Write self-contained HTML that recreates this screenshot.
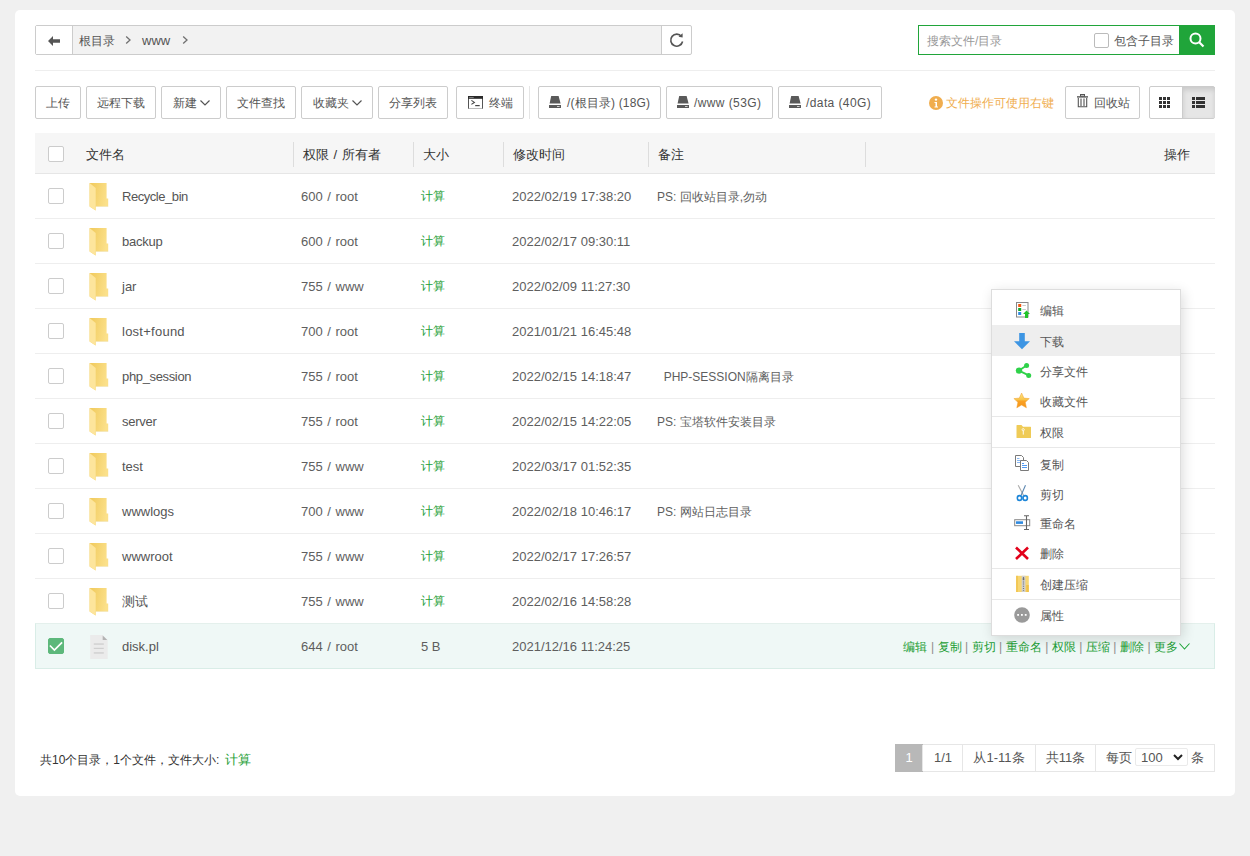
<!DOCTYPE html>
<html><head><meta charset="utf-8">
<style>
*{box-sizing:border-box;margin:0;padding:0}
html,body{width:1250px;height:856px;overflow:hidden;background:#f0f0f0;font-family:"Liberation Sans",sans-serif;color:#555;font-size:13px}
.abs{position:absolute}
.card{position:absolute;left:15px;top:10px;width:1220px;height:786px;background:#fff;border-radius:5px}
.crumb{position:absolute;left:35px;top:25px;width:657px;height:30px;border:1px solid #ccc;border-radius:2px;background:#f2f2f2}
.back{position:absolute;left:0;top:0;width:37px;height:28px;background:#fff;border-right:1px solid #ccc}
.refresh{position:absolute;right:0;top:0;width:30px;height:28px;background:#fff;border-left:1px solid #ccc;border-radius:0 2px 2px 0}
.search{position:absolute;left:918px;top:25px;width:297px;height:30px;border:1px solid #20a53a;background:#fff}
.sbtn{position:absolute;right:-1px;top:-1px;width:36px;height:30px;background:#20a53a}
.hr{position:absolute;left:35px;top:70px;width:1180px;height:1px;background:#eee}
.btn{position:absolute;top:86px;height:33px;border:1px solid #ccc;border-radius:2px;background:#fff;color:#555;font-size:12px;line-height:32px;text-align:center;white-space:nowrap}
.th{position:absolute;left:35px;top:133px;width:1180px;height:41px;background:#f6f6f6;border-bottom:1px solid #e6e6e6}
.sep{position:absolute;top:9px;width:1px;height:25px;background:#ddd}
.ht{position:absolute;top:1px;line-height:41px;color:#333;font-size:13px}
.row{position:absolute;left:35px;width:1180px;height:45px;border-bottom:1px solid #eee}
.cb{position:absolute;left:13px;top:14px;width:16px;height:16px;border:1px solid #ccc;border-radius:2px;background:#fff}
.c{position:absolute;top:0;line-height:45px;white-space:nowrap;color:#5e5e5e}
.green{color:#1c9e35!important}
.menu{position:absolute;left:991px;top:289px;width:190px;height:347px;background:#fff;border:1px solid #ddd;box-shadow:2px 3px 12px rgba(0,0,0,.14)}
.mi{position:absolute;left:0;width:188px;height:30px;line-height:30px;font-size:12px;color:#555}
.mi span{position:absolute;left:48px}
.msep{position:absolute;left:0;width:188px;height:1px;background:#e8e8e8}
</style></head><body>
<div class="card"></div>

<!-- breadcrumb -->
<div class="crumb">
  <div class="back"><svg class="abs" style="left:12px;top:10px" width="13" height="10" viewBox="0 0 13 10"><path d="M0 5 L5 0 L5 3.2 L12 3.2 L12 6.8 L5 6.8 L5 10 Z" fill="#555"/></svg></div>
  <div class="abs" style="left:43px;top:1px;line-height:28px;font-size:12px;color:#555">根目录</div>
  <svg class="abs" style="left:89px;top:9px" width="7" height="10" viewBox="0 0 7 10"><path d="M1.2 1.6 L5 5.1 L1.2 8.6" stroke="#707070" stroke-width="1.3" fill="none"/></svg>
  <div class="abs" style="left:106px;top:1px;line-height:28px;font-size:13px;color:#555">www</div>
  <svg class="abs" style="left:146px;top:9px" width="7" height="10" viewBox="0 0 7 10"><path d="M1.2 1.6 L5 5.1 L1.2 8.6" stroke="#707070" stroke-width="1.3" fill="none"/></svg>
  <div class="refresh"><svg class="abs" style="left:7px;top:6px" width="16" height="16" viewBox="0 0 16 16"><path d="M12.5 4.5 A6 6 0 1 0 13.6 9.5" stroke="#555" stroke-width="1.6" fill="none"/><path d="M9.5 4.8 L13.6 5.4 L13.6 1.2 Z" fill="#555"/></svg></div>
</div>

<!-- search -->
<div class="search">
  <div class="abs" style="left:8px;top:1px;line-height:28px;font-size:12px;color:#999">搜索文件/目录</div>
  <div class="abs" style="left:175px;top:7px;width:15px;height:15px;border:1px solid #bbb;border-radius:2px"></div>
  <div class="abs" style="left:195px;top:1px;line-height:28px;font-size:12px;color:#555">包含子目录</div>
  <div class="sbtn"><svg class="abs" style="left:10px;top:7px" width="16" height="16" viewBox="0 0 16 16"><circle cx="6.5" cy="6.5" r="5" stroke="#fff" stroke-width="2" fill="none"/><path d="M10 10 L14.5 14.5" stroke="#fff" stroke-width="2.2"/></svg></div>
</div>

<div class="hr"></div>

<!-- toolbar -->
<div class="btn" style="left:35px;width:46px">上传</div>
<div class="btn" style="left:86px;width:70px">远程下载</div>
<div class="btn" style="left:161px;width:60px">新建<svg style="margin-left:3px;vertical-align:1px" width="10" height="6" viewBox="0 0 10 6"><path d="M0.5 0.5 L5 5 L9.5 0.5" stroke="#555" stroke-width="1.2" fill="none"/></svg></div>
<div class="btn" style="left:226px;width:70px">文件查找</div>
<div class="btn" style="left:301px;width:72px">收藏夹<svg style="margin-left:3px;vertical-align:1px" width="10" height="6" viewBox="0 0 10 6"><path d="M0.5 0.5 L5 5 L9.5 0.5" stroke="#555" stroke-width="1.2" fill="none"/></svg></div>
<div class="btn" style="left:378px;width:70px">分享列表</div>
<div class="btn" style="left:456px;width:68px"><svg class="abs" style="left:11px;top:9px" width="15" height="13" viewBox="0 0 15 13"><rect x="0.5" y="0.5" width="14" height="12" fill="#fff" stroke="#555" stroke-width="1"/><rect x="0.5" y="12" width="14" height="1" fill="#bbb"/><rect x="0" y="0" width="15" height="2.8" fill="#2a2a2a"/><rect x="1.2" y="1" width="4.5" height="0.9" fill="#8a8a8a"/><path d="M3.4 4.4 L6.4 6.4 L3.4 8.4" stroke="#444" stroke-width="1.1" fill="none"/><path d="M7.2 9.6 L11.7 9.6" stroke="#444" stroke-width="1.2"/></svg><span class="abs" style="left:32px">终端</span></div>
<div class="abs" style="left:529px;top:86px;width:1px;height:33px;background:#e5e5e5"></div>
<div class="btn" style="left:538px;width:123px"><svg class="abs" style="left:10px;top:9px" width="12" height="12" viewBox="0 0 12 12"><path d="M2.2 0 L9.6 0 L11.6 7.6 L0.6 7.6 Z" fill="#5a5a5a"/><rect x="0" y="9" width="12" height="3" fill="#5a5a5a"/><rect x="8" y="10" width="2.6" height="1" fill="#cfcfcf"/></svg><span class="abs" style="left:28px;letter-spacing:0.15px">/(根目录) (18G)</span></div>
<div class="btn" style="left:666px;width:107px"><svg class="abs" style="left:10px;top:9px" width="12" height="12" viewBox="0 0 12 12"><path d="M2.2 0 L9.6 0 L11.6 7.6 L0.6 7.6 Z" fill="#5a5a5a"/><rect x="0" y="9" width="12" height="3" fill="#5a5a5a"/><rect x="8" y="10" width="2.6" height="1" fill="#cfcfcf"/></svg><span class="abs" style="left:27px;letter-spacing:0.4px">/www (53G)</span></div>
<div class="btn" style="left:778px;width:104px"><svg class="abs" style="left:10px;top:9px" width="12" height="12" viewBox="0 0 12 12"><path d="M2.2 0 L9.6 0 L11.6 7.6 L0.6 7.6 Z" fill="#5a5a5a"/><rect x="0" y="9" width="12" height="3" fill="#5a5a5a"/><rect x="8" y="10" width="2.6" height="1" fill="#cfcfcf"/></svg><span class="abs" style="left:27px;letter-spacing:0.4px">/data (40G)</span></div>

<svg class="abs" style="left:929px;top:96px" width="14" height="14" viewBox="0 0 14 14"><circle cx="7" cy="7" r="7" fill="#f0ad4e"/><circle cx="7" cy="3.6" r="1.2" fill="#fff"/><path d="M5.5 6 L8 6 L8 10.5 L9 10.5 L9 11.5 L5.5 11.5 L5.5 10.5 L6.5 10.5 L6.5 7 L5.5 7 Z" fill="#fff"/></svg>
<div class="abs" style="left:946px;top:87px;line-height:33px;font-size:12px;color:#f0ad4e">文件操作可使用右键</div>
<div class="btn" style="left:1065px;width:75px"><svg class="abs" style="left:11px;top:7px" width="12" height="14" viewBox="0 0 12 14"><rect x="3.5" y="0.5" width="4" height="1.6" fill="none" stroke="#555" stroke-width="1"/><rect x="0" y="2.2" width="11" height="1.4" fill="#555"/><path d="M1.3 4 L1.3 12.8 L9.7 12.8 L9.7 4" fill="none" stroke="#555" stroke-width="1.1"/><path d="M4 4.5 L4 12 M7 4.5 L7 12" stroke="#555" stroke-width="1.1"/></svg><span class="abs" style="left:28px">回收站</span></div>
<div class="btn" style="left:1149px;width:66px;padding:0">
  <div class="abs" style="left:32px;top:0;width:33px;height:31px;background:#e6e6e6;box-shadow:inset 0 3px 5px rgba(0,0,0,.125);border-left:1px solid #ccc"></div>
  <svg class="abs" style="left:9px;top:10px" width="11" height="11" viewBox="0 0 11 11"><g fill="#333"><rect x="0" y="0" width="3" height="3"/><rect x="4" y="0" width="3" height="3"/><rect x="8" y="0" width="3" height="3"/><rect x="0" y="4" width="3" height="3"/><rect x="4" y="4" width="3" height="3"/><rect x="8" y="4" width="3" height="3"/><rect x="0" y="8" width="3" height="3"/><rect x="4" y="8" width="3" height="3"/><rect x="8" y="8" width="3" height="3"/></g></svg>
  <svg class="abs" style="left:42px;top:10px" width="13" height="11" viewBox="0 0 13 11"><g fill="#333"><rect x="0" y="0" width="3" height="3"/><rect x="4" y="0" width="9" height="3"/><rect x="0" y="4" width="3" height="3"/><rect x="4" y="4" width="9" height="3"/><rect x="0" y="8" width="3" height="3"/><rect x="4" y="8" width="9" height="3"/></g></svg>
</div>

<!-- table header -->
<div class="th">
  <div class="cb" style="top:13px"></div>
  <div class="ht" style="left:51px">文件名</div>
  <div class="sep" style="left:258px"></div><div class="ht" style="left:268px;word-spacing:1px">权限 / 所有者</div>
  <div class="sep" style="left:378px"></div><div class="ht" style="left:388px">大小</div>
  <div class="sep" style="left:468px"></div><div class="ht" style="left:478px">修改时间</div>
  <div class="sep" style="left:613px"></div><div class="ht" style="left:623px">备注</div>
  <div class="sep" style="left:830px"></div>
  <div class="ht" style="left:1129px">操作</div>
</div>

<!-- rows inserted below -->
<div class="row" style="top:174px">
<div class="cb"></div><svg class="abs" style="left:54px;top:9px" width="21" height="29" viewBox="0 0 21 29">
<defs><linearGradient id="fg0" x1="0" y1="0" x2="1" y2="0.3"><stop offset="0" stop-color="#f0c95a"/><stop offset="1" stop-color="#fbe08a"/></linearGradient></defs>
<path d="M0.6 0 L17.6 0 L17.6 15.4 L19.2 15.6 L19.2 23.4 L6.7 23.4 L6.7 27.6 L0.6 23.6 Z" fill="url(#fg0)"/>
<path d="M0.6 0 L6.7 5.1 L6.7 27.6 L0.6 23.6 Z" fill="#fde59c"/>
<path d="M6.7 23.4 L19.2 23.4 L19.2 24 L6.7 24 Z" fill="#e8d9a8" opacity="0.5"/>
</svg>
<div class="c" style="left:87px;color:#555;letter-spacing:-0.45px">Recycle_bin</div>
<div class="c" style="left:266px;word-spacing:1px">600 / root</div>
<div class="c green" style="left:386px;font-size:12px">计算</div>
<div class="c" style="left:477px">2022/02/19 17:38:20</div>
<div class="c" style="left:622px;top:1px;font-size:12px;white-space:pre">PS: 回收站目录,勿动</div>
</div>
<div class="row" style="top:219px">
<div class="cb"></div><svg class="abs" style="left:54px;top:9px" width="21" height="29" viewBox="0 0 21 29">
<defs><linearGradient id="fg1" x1="0" y1="0" x2="1" y2="0.3"><stop offset="0" stop-color="#f0c95a"/><stop offset="1" stop-color="#fbe08a"/></linearGradient></defs>
<path d="M0.6 0 L17.6 0 L17.6 15.4 L19.2 15.6 L19.2 23.4 L6.7 23.4 L6.7 27.6 L0.6 23.6 Z" fill="url(#fg1)"/>
<path d="M0.6 0 L6.7 5.1 L6.7 27.6 L0.6 23.6 Z" fill="#fde59c"/>
<path d="M6.7 23.4 L19.2 23.4 L19.2 24 L6.7 24 Z" fill="#e8d9a8" opacity="0.5"/>
</svg>
<div class="c" style="left:87px;color:#555;letter-spacing:-0.25px">backup</div>
<div class="c" style="left:266px;word-spacing:1px">600 / root</div>
<div class="c green" style="left:386px;font-size:12px">计算</div>
<div class="c" style="left:477px">2022/02/17 09:30:11</div>
<div class="c" style="left:622px;top:1px;font-size:12px;white-space:pre"></div>
</div>
<div class="row" style="top:264px">
<div class="cb"></div><svg class="abs" style="left:54px;top:9px" width="21" height="29" viewBox="0 0 21 29">
<defs><linearGradient id="fg2" x1="0" y1="0" x2="1" y2="0.3"><stop offset="0" stop-color="#f0c95a"/><stop offset="1" stop-color="#fbe08a"/></linearGradient></defs>
<path d="M0.6 0 L17.6 0 L17.6 15.4 L19.2 15.6 L19.2 23.4 L6.7 23.4 L6.7 27.6 L0.6 23.6 Z" fill="url(#fg2)"/>
<path d="M0.6 0 L6.7 5.1 L6.7 27.6 L0.6 23.6 Z" fill="#fde59c"/>
<path d="M6.7 23.4 L19.2 23.4 L19.2 24 L6.7 24 Z" fill="#e8d9a8" opacity="0.5"/>
</svg>
<div class="c" style="left:87px;color:#555;letter-spacing:0px">jar</div>
<div class="c" style="left:266px;word-spacing:1px">755 / www</div>
<div class="c green" style="left:386px;font-size:12px">计算</div>
<div class="c" style="left:477px">2022/02/09 11:27:30</div>
<div class="c" style="left:622px;top:1px;font-size:12px;white-space:pre"></div>
</div>
<div class="row" style="top:309px">
<div class="cb"></div><svg class="abs" style="left:54px;top:9px" width="21" height="29" viewBox="0 0 21 29">
<defs><linearGradient id="fg3" x1="0" y1="0" x2="1" y2="0.3"><stop offset="0" stop-color="#f0c95a"/><stop offset="1" stop-color="#fbe08a"/></linearGradient></defs>
<path d="M0.6 0 L17.6 0 L17.6 15.4 L19.2 15.6 L19.2 23.4 L6.7 23.4 L6.7 27.6 L0.6 23.6 Z" fill="url(#fg3)"/>
<path d="M0.6 0 L6.7 5.1 L6.7 27.6 L0.6 23.6 Z" fill="#fde59c"/>
<path d="M6.7 23.4 L19.2 23.4 L19.2 24 L6.7 24 Z" fill="#e8d9a8" opacity="0.5"/>
</svg>
<div class="c" style="left:87px;color:#555;letter-spacing:0.25px">lost+found</div>
<div class="c" style="left:266px;word-spacing:1px">700 / root</div>
<div class="c green" style="left:386px;font-size:12px">计算</div>
<div class="c" style="left:477px">2021/01/21 16:45:48</div>
<div class="c" style="left:622px;top:1px;font-size:12px;white-space:pre"></div>
</div>
<div class="row" style="top:354px">
<div class="cb"></div><svg class="abs" style="left:54px;top:9px" width="21" height="29" viewBox="0 0 21 29">
<defs><linearGradient id="fg4" x1="0" y1="0" x2="1" y2="0.3"><stop offset="0" stop-color="#f0c95a"/><stop offset="1" stop-color="#fbe08a"/></linearGradient></defs>
<path d="M0.6 0 L17.6 0 L17.6 15.4 L19.2 15.6 L19.2 23.4 L6.7 23.4 L6.7 27.6 L0.6 23.6 Z" fill="url(#fg4)"/>
<path d="M0.6 0 L6.7 5.1 L6.7 27.6 L0.6 23.6 Z" fill="#fde59c"/>
<path d="M6.7 23.4 L19.2 23.4 L19.2 24 L6.7 24 Z" fill="#e8d9a8" opacity="0.5"/>
</svg>
<div class="c" style="left:87px;color:#555;letter-spacing:-0.35px">php_session</div>
<div class="c" style="left:266px;word-spacing:1px">755 / root</div>
<div class="c green" style="left:386px;font-size:12px">计算</div>
<div class="c" style="left:477px">2022/02/15 14:18:47</div>
<div class="c" style="left:622px;top:1px;font-size:12px;white-space:pre">  PHP-SESSION隔离目录</div>
</div>
<div class="row" style="top:399px">
<div class="cb"></div><svg class="abs" style="left:54px;top:9px" width="21" height="29" viewBox="0 0 21 29">
<defs><linearGradient id="fg5" x1="0" y1="0" x2="1" y2="0.3"><stop offset="0" stop-color="#f0c95a"/><stop offset="1" stop-color="#fbe08a"/></linearGradient></defs>
<path d="M0.6 0 L17.6 0 L17.6 15.4 L19.2 15.6 L19.2 23.4 L6.7 23.4 L6.7 27.6 L0.6 23.6 Z" fill="url(#fg5)"/>
<path d="M0.6 0 L6.7 5.1 L6.7 27.6 L0.6 23.6 Z" fill="#fde59c"/>
<path d="M6.7 23.4 L19.2 23.4 L19.2 24 L6.7 24 Z" fill="#e8d9a8" opacity="0.5"/>
</svg>
<div class="c" style="left:87px;color:#555;letter-spacing:-0.25px">server</div>
<div class="c" style="left:266px;word-spacing:1px">755 / root</div>
<div class="c green" style="left:386px;font-size:12px">计算</div>
<div class="c" style="left:477px">2022/02/15 14:22:05</div>
<div class="c" style="left:622px;top:1px;font-size:12px;white-space:pre">PS: 宝塔软件安装目录</div>
</div>
<div class="row" style="top:444px">
<div class="cb"></div><svg class="abs" style="left:54px;top:9px" width="21" height="29" viewBox="0 0 21 29">
<defs><linearGradient id="fg6" x1="0" y1="0" x2="1" y2="0.3"><stop offset="0" stop-color="#f0c95a"/><stop offset="1" stop-color="#fbe08a"/></linearGradient></defs>
<path d="M0.6 0 L17.6 0 L17.6 15.4 L19.2 15.6 L19.2 23.4 L6.7 23.4 L6.7 27.6 L0.6 23.6 Z" fill="url(#fg6)"/>
<path d="M0.6 0 L6.7 5.1 L6.7 27.6 L0.6 23.6 Z" fill="#fde59c"/>
<path d="M6.7 23.4 L19.2 23.4 L19.2 24 L6.7 24 Z" fill="#e8d9a8" opacity="0.5"/>
</svg>
<div class="c" style="left:87px;color:#555;letter-spacing:0px">test</div>
<div class="c" style="left:266px;word-spacing:1px">755 / www</div>
<div class="c green" style="left:386px;font-size:12px">计算</div>
<div class="c" style="left:477px">2022/03/17 01:52:35</div>
<div class="c" style="left:622px;top:1px;font-size:12px;white-space:pre"></div>
</div>
<div class="row" style="top:489px">
<div class="cb"></div><svg class="abs" style="left:54px;top:9px" width="21" height="29" viewBox="0 0 21 29">
<defs><linearGradient id="fg7" x1="0" y1="0" x2="1" y2="0.3"><stop offset="0" stop-color="#f0c95a"/><stop offset="1" stop-color="#fbe08a"/></linearGradient></defs>
<path d="M0.6 0 L17.6 0 L17.6 15.4 L19.2 15.6 L19.2 23.4 L6.7 23.4 L6.7 27.6 L0.6 23.6 Z" fill="url(#fg7)"/>
<path d="M0.6 0 L6.7 5.1 L6.7 27.6 L0.6 23.6 Z" fill="#fde59c"/>
<path d="M6.7 23.4 L19.2 23.4 L19.2 24 L6.7 24 Z" fill="#e8d9a8" opacity="0.5"/>
</svg>
<div class="c" style="left:87px;color:#555;letter-spacing:0px">wwwlogs</div>
<div class="c" style="left:266px;word-spacing:1px">700 / www</div>
<div class="c green" style="left:386px;font-size:12px">计算</div>
<div class="c" style="left:477px">2022/02/18 10:46:17</div>
<div class="c" style="left:622px;top:1px;font-size:12px;white-space:pre">PS: 网站日志目录</div>
</div>
<div class="row" style="top:534px">
<div class="cb"></div><svg class="abs" style="left:54px;top:9px" width="21" height="29" viewBox="0 0 21 29">
<defs><linearGradient id="fg8" x1="0" y1="0" x2="1" y2="0.3"><stop offset="0" stop-color="#f0c95a"/><stop offset="1" stop-color="#fbe08a"/></linearGradient></defs>
<path d="M0.6 0 L17.6 0 L17.6 15.4 L19.2 15.6 L19.2 23.4 L6.7 23.4 L6.7 27.6 L0.6 23.6 Z" fill="url(#fg8)"/>
<path d="M0.6 0 L6.7 5.1 L6.7 27.6 L0.6 23.6 Z" fill="#fde59c"/>
<path d="M6.7 23.4 L19.2 23.4 L19.2 24 L6.7 24 Z" fill="#e8d9a8" opacity="0.5"/>
</svg>
<div class="c" style="left:87px;color:#555;letter-spacing:0px">wwwroot</div>
<div class="c" style="left:266px;word-spacing:1px">755 / www</div>
<div class="c green" style="left:386px;font-size:12px">计算</div>
<div class="c" style="left:477px">2022/02/17 17:26:57</div>
<div class="c" style="left:622px;top:1px;font-size:12px;white-space:pre"></div>
</div>
<div class="row" style="top:579px">
<div class="cb"></div><svg class="abs" style="left:54px;top:9px" width="21" height="29" viewBox="0 0 21 29">
<defs><linearGradient id="fg9" x1="0" y1="0" x2="1" y2="0.3"><stop offset="0" stop-color="#f0c95a"/><stop offset="1" stop-color="#fbe08a"/></linearGradient></defs>
<path d="M0.6 0 L17.6 0 L17.6 15.4 L19.2 15.6 L19.2 23.4 L6.7 23.4 L6.7 27.6 L0.6 23.6 Z" fill="url(#fg9)"/>
<path d="M0.6 0 L6.7 5.1 L6.7 27.6 L0.6 23.6 Z" fill="#fde59c"/>
<path d="M6.7 23.4 L19.2 23.4 L19.2 24 L6.7 24 Z" fill="#e8d9a8" opacity="0.5"/>
</svg>
<div class="c" style="left:87px;color:#555;letter-spacing:0px">测试</div>
<div class="c" style="left:266px;word-spacing:1px">755 / www</div>
<div class="c green" style="left:386px;font-size:12px">计算</div>
<div class="c" style="left:477px">2022/02/16 14:58:28</div>
<div class="c" style="left:622px;top:1px;font-size:12px;white-space:pre"></div>
</div>
<div class="row sel" style="top:623px;background:#eff8f6;border:1px solid #d9ede7;border-top-color:#e4f0ec;height:46px">
<div class="cb" style="left:12px;top:14px;background:#5db87b;border-color:#5db87b"><svg class="abs" style="left:-1px;top:-1px" width="16" height="16" viewBox="0 0 16 16"><path d="M1.9 7.5 L6.4 12 L14.1 4.3" stroke="#fff" stroke-width="1.7" fill="none"/></svg></div><svg class="abs" style="left:54px;top:11px" width="18" height="24" viewBox="0 0 18 24">
<path d="M0.2 0 L12.7 0 L17.7 5 L17.7 24 L0.2 24 Z" fill="#ebebeb"/><path d="M12.7 0.4 L17.3 5 L12.7 5 Z" fill="#b3b3b3"/>
<rect x="3.8" y="8.4" width="10" height="1.3" fill="#cdcdcd"/><rect x="3.8" y="12.8" width="10" height="1.1" fill="#cdcdcd"/><rect x="3.8" y="17.3" width="10" height="1.3" fill="#cdcdcd"/></svg>
<div class="c" style="left:86px;color:#555">disk.pl</div>
<div class="c" style="left:265px;word-spacing:1px">644 / root</div>
<div class="c" style="left:385px">5 B</div>
<div class="c" style="left:476px">2021/12/16 11:24:25</div>
<div class="c green" style="right:24px;top:1px;font-size:12px">编辑<span style="color:#8c8c8c;margin:0 0.15px"> | </span>复制<span style="color:#8c8c8c;margin:0 0.15px"> | </span>剪切<span style="color:#8c8c8c;margin:0 0.15px"> | </span>重命名<span style="color:#8c8c8c;margin:0 0.15px"> | </span>权限<span style="color:#8c8c8c;margin:0 0.15px"> | </span>压缩<span style="color:#8c8c8c;margin:0 0.15px"> | </span>删除<span style="color:#8c8c8c;margin:0 0.15px"> | </span>更多<svg style="margin-left:1px;vertical-align:1px" width="11" height="7" viewBox="0 0 11 7"><path d="M0.5 0.5 L5.5 6 L10.5 0.5" stroke="#20a53a" stroke-width="1.1" fill="none"/></svg></div>
</div>

<!-- footer -->
<div class="abs" style="left:40px;top:749px;line-height:22px;font-size:12px;color:#333">共10个目录，1个文件，文件大小: <span class="green" style="font-size:13px;margin-left:2px">计算</span></div>
<div class="abs" style="left:895px;top:744px;width:320px;height:28px;border:1px solid #e6e6e6;font-size:13px;color:#555">
<div class="abs" style="left:-1px;top:-1px;width:28px;height:28px;background:#b8b8b8;color:#fff;text-align:center;line-height:28px">1</div>
<div class="abs" style="left:26px;top:0;width:1px;height:26px;background:#e6e6e6"></div>
<div class="abs" style="left:27px;top:0;width:40px;text-align:center;line-height:26px">1/1</div>
<div class="abs" style="left:66px;top:0;width:1px;height:26px;background:#e6e6e6"></div>
<div class="abs" style="left:67px;top:0;width:72px;text-align:center;line-height:26px">从1-11条</div>
<div class="abs" style="left:139px;top:0;width:1px;height:26px;background:#e6e6e6"></div>
<div class="abs" style="left:140px;top:0;width:59px;text-align:center;line-height:26px">共11条</div>
<div class="abs" style="left:199px;top:0;width:1px;height:26px;background:#e6e6e6"></div>
<div class="abs" style="left:210px;top:0;line-height:26px">每页</div>
<div class="abs" style="left:239px;top:3px;width:53px;height:18px;border:1px solid #eaeaea;border-radius:2px;line-height:17px;padding-left:5px">100<svg class="abs" style="left:37px;top:5px" width="10" height="7" viewBox="0 0 10 7"><path d="M1 1 L5 5 L9 1" stroke="#222" stroke-width="2" fill="none"/></svg></div>
<div class="abs" style="left:295px;top:0;line-height:26px">条</div>
</div>

<div class="menu">
<div class="abs" style="left:0;top:35px;width:188px;height:31px;background:#eee"></div>
<div class="mi" style="top:6px"><span>编辑</span></div>
<div class="mi" style="top:37px"><span>下载</span></div>
<div class="mi" style="top:67px"><span>分享文件</span></div>
<div class="mi" style="top:97px"><span>收藏文件</span></div>
<div class="mi" style="top:128px"><span>权限</span></div>
<div class="mi" style="top:160px"><span>复制</span></div>
<div class="mi" style="top:190px"><span>剪切</span></div>
<div class="mi" style="top:219px"><span>重命名</span></div>
<div class="mi" style="top:249px"><span>删除</span></div>
<div class="mi" style="top:280px"><span>创建压缩</span></div>
<div class="mi" style="top:311px"><span>属性</span></div>
<div class="msep" style="top:126px"></div>
<div class="msep" style="top:157px"></div>
<div class="msep" style="top:278px"></div>
<div class="msep" style="top:309px"></div>
</div>
<svg class="abs" style="left:0;top:0" width="1250" height="856" viewBox="0 0 1250 856">
<!-- edit -->
<rect x="1016.5" y="302.5" width="11.5" height="14.5" fill="#fff" stroke="#888" stroke-width="1"/>
<rect x="1018.2" y="304" width="3" height="3" fill="#f05a12"/>
<rect x="1018.2" y="308" width="3" height="3" fill="#12a82a"/>
<rect x="1018.2" y="312" width="3" height="3" fill="#2f8ae0"/>
<rect x="1022.4" y="305" width="3.5" height="1" fill="#ccc"/>
<rect x="1022.4" y="309" width="3.5" height="1" fill="#ccc"/>
<path d="M1026.5 310.5 L1030 314 L1028 314 L1028 318 L1025 318 L1025 314 L1023 314 Z" fill="#22c32a"/>
<!-- down -->
<path d="M1019.2 333 L1024.8 333 L1024.8 341.2 L1030 341.2 L1022 349.2 L1014 341.2 L1019.2 341.2 Z" fill="#3d95e3"/>
<!-- share -->
<path d="M1019 370.6 L1026.6 365.6 M1019 370.6 L1028.7 375.4" stroke="#2fd24a" stroke-width="1.8"/>
<circle cx="1019" cy="370.6" r="3.2" fill="#2fd24a"/>
<circle cx="1026.6" cy="365.6" r="2.5" fill="#2fd24a"/>
<circle cx="1028.7" cy="375.4" r="2.5" fill="#2fd24a"/>
<!-- star -->
<defs><linearGradient id="stg" x1="0" y1="0" x2="0" y2="1"><stop offset="0" stop-color="#fde58a"/><stop offset="0.45" stop-color="#f8c548"/><stop offset="0.55" stop-color="#f9a124"/><stop offset="1" stop-color="#f7951a"/></linearGradient></defs>
<path d="M1021.6 393 L1023.9 398.1 L1029.3 398.6 L1025.3 402.3 L1026.4 407.8 L1021.6 405 L1016.8 407.8 L1017.9 402.3 L1013.9 398.6 L1019.3 398.1 Z" fill="url(#stg)" stroke="#f0a030" stroke-width="0.5"/>
<!-- perm -->
<path d="M1016.5 425.5 Q1016.5 425 1017 425 L1021.5 425 L1023 426.8 L1030.5 426.8 Q1031 426.8 1031 427.3 L1031 437.5 Q1031 438 1030.5 438 L1017 438 Q1016.5 438 1016.5 437.5 Z" fill="#efcb57"/>
<circle cx="1023.2" cy="429.7" r="1.1" fill="none" stroke="#fff" stroke-width="0.8"/>
<rect x="1022.8" y="430.8" width="0.9" height="3.8" fill="#fff"/>
<!-- copy -->
<path d="M1015.5 455.5 L1021.5 455.5 L1023.5 457.5 L1023.5 466.5 L1015.5 466.5 Z" fill="#fff" stroke="#7a7a7a" stroke-width="1"/>
<path d="M1017 458.5 L1019.5 458.5 M1017 460.5 L1021.5 460.5 M1017 462.5 L1021.5 462.5" stroke="#6aa6f0" stroke-width="0.8"/>
<path d="M1020.5 460.5 L1026.5 460.5 L1028.5 462.5 L1028.5 470.5 L1020.5 470.5 Z" fill="#fff" stroke="#7a7a7a" stroke-width="1"/>
<path d="M1022 463.5 L1024 463.5 M1022 465.5 L1027 465.5 M1022 467.5 L1027 467.5" stroke="#3d8ef0" stroke-width="0.9"/>
<!-- cut -->
<path d="M1018.2 485.3 L1023.6 495.5" stroke="#aaa" stroke-width="1.1"/>
<path d="M1025.5 485.3 L1021 495.5" stroke="#5a86b0" stroke-width="1.1"/>
<ellipse cx="1019.5" cy="498" rx="2.2" ry="2.4" fill="none" stroke="#1e86d8" stroke-width="1.6"/>
<ellipse cx="1025.2" cy="498" rx="2.2" ry="2.4" fill="none" stroke="#1e86d8" stroke-width="1.6"/>
<!-- rename -->
<rect x="1014.7" y="519.7" width="15" height="6" fill="#fff" stroke="#888" stroke-width="1"/>
<rect x="1016" y="521.3" width="7" height="2.6" fill="#2f8ae0"/>
<path d="M1024 515.7 L1029 515.7 M1026.5 515.7 L1026.5 529.5 M1024 529.5 L1029 529.5" stroke="#666" stroke-width="1.1"/>
<!-- delete -->
<path d="M1016 547.5 L1028 559 M1028 547.5 L1016 559" stroke="#e2001a" stroke-width="2.6"/>
<!-- zip -->
<rect x="1016.2" y="575.8" width="12.6" height="16.2" fill="#f7d673"/>
<rect x="1016.2" y="575.8" width="1.5" height="16.2" fill="#f0c24a"/>
<rect x="1021.7" y="575.8" width="3.7" height="16.2" fill="#cfcfcf"/>
<path d="M1023.5 577 L1023.5 591" stroke="#777" stroke-width="1.2" stroke-dasharray="1 1.2"/>
<circle cx="1023.5" cy="579" r="0.9" fill="#666"/>
<rect x="1026.3" y="585" width="2.5" height="7" fill="#f0c24a"/>
<!-- attr -->
<circle cx="1022" cy="615" r="7.8" fill="#9a9a9a"/>
<rect x="1017.2" y="614" width="1.8" height="1.8" fill="#fff"/>
<rect x="1021" y="614" width="1.8" height="1.8" fill="#fff"/>
<rect x="1024.8" y="614" width="1.8" height="1.8" fill="#fff"/>
</svg>
</body></html>
